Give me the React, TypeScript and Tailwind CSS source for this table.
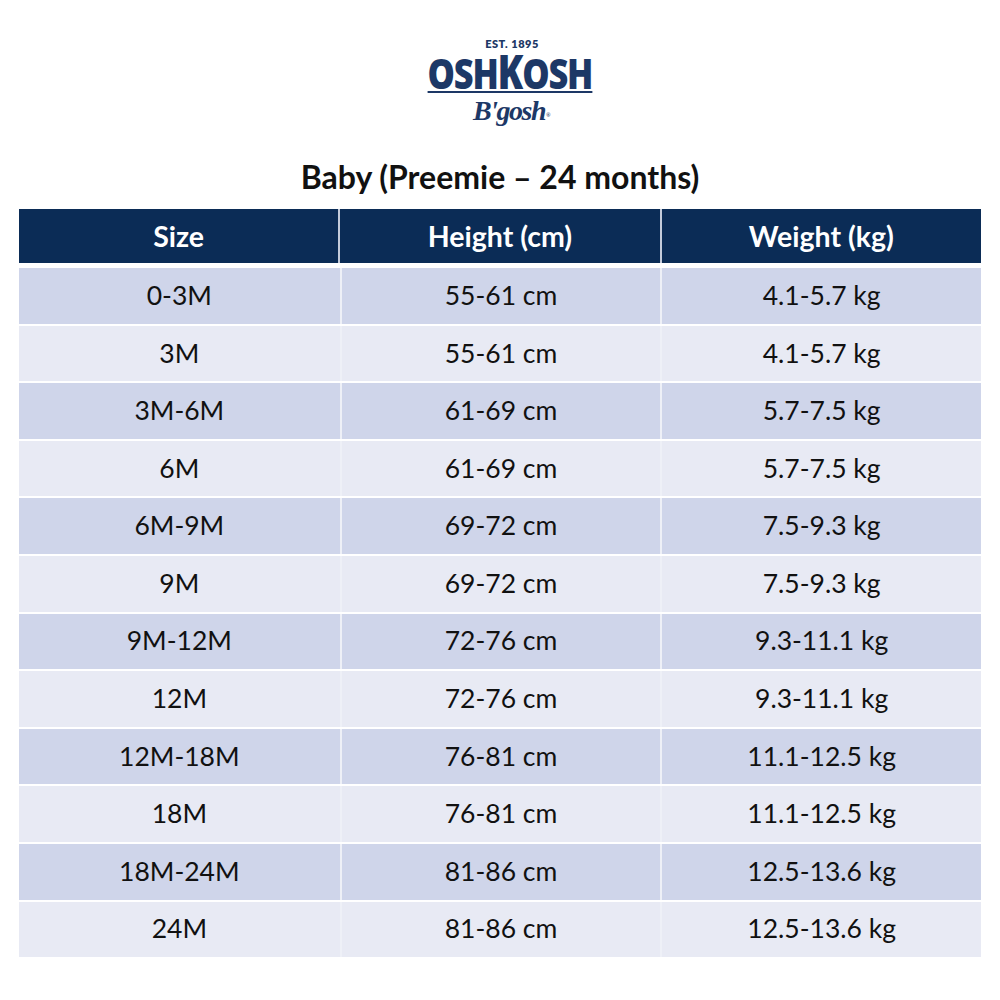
import React from "react";

type Row = { size: string; height: string; weight: string };

const rows: Row[] = [
  { size: "0-3M", height: "55-61 cm", weight: "4.1-5.7 kg" },
  { size: "3M", height: "55-61 cm", weight: "4.1-5.7 kg" },
  { size: "3M-6M", height: "61-69 cm", weight: "5.7-7.5 kg" },
  { size: "6M", height: "61-69 cm", weight: "5.7-7.5 kg" },
  { size: "6M-9M", height: "69-72 cm", weight: "7.5-9.3 kg" },
  { size: "9M", height: "69-72 cm", weight: "7.5-9.3 kg" },
  { size: "9M-12M", height: "72-76 cm", weight: "9.3-11.1 kg" },
  { size: "12M", height: "72-76 cm", weight: "9.3-11.1 kg" },
  { size: "12M-18M", height: "76-81 cm", weight: "11.1-12.5 kg" },
  { size: "18M", height: "76-81 cm", weight: "11.1-12.5 kg" },
  { size: "18M-24M", height: "81-86 cm", weight: "12.5-13.6 kg" },
  { size: "24M", height: "81-86 cm", weight: "12.5-13.6 kg" },
];

const Logo = () => {
  return (
    <div className="flex flex-col items-center text-[#1d3866]">
      <span className="ml-[24px] font-['Lato',sans-serif] font-extrabold text-[11px] leading-[11px] tracking-[0.5px]">
        EST. 1895
      </span>
      <span className="mt-[5px] ml-[20px] scale-x-[0.8] font-['Open_Sans',sans-serif] font-extrabold text-[43px] leading-[34px] tracking-[-1.5px] border-b-2 border-[#1d3866] pb-[1px]">
        OSH<span className="text-[47px]">K</span>OSH
      </span>
      <span className="ml-[22px] font-['Liberation_Serif',serif] italic font-bold text-[28px] leading-[36px] tracking-[-1.5px]">
        B'gosh<sup className="text-[6px] ml-[1px]">®</sup>
      </span>
    </div>
  );
};

export default function App() {
  return (
    <div className="w-[1000px] h-[1000px] bg-white flex flex-col items-center pt-[38px] font-['Lato',sans-serif]">
      <Logo />
      <h1 className="mt-[29px] text-[32px] leading-[38px] font-bold text-[#111]">
        Baby (Preemie – 24 months)
      </h1>
      <div className="mt-[13px] w-[962px] flex flex-col text-[26.5px]">
        <div className="grid grid-cols-3 gap-x-[2px] h-[54px] bg-[#c4cbdb] text-[28.5px]">
          <div className="bg-[#0b2c56] flex items-center justify-center text-white font-bold">Size</div>
          <div className="bg-[#0b2c56] flex items-center justify-center text-white font-bold">Height (cm)</div>
          <div className="bg-[#0b2c56] flex items-center justify-center text-white font-bold">Weight (kg)</div>
        </div>
        <div className="mt-[5px] flex flex-col gap-y-[2px]">
          {rows.map((r, i) => (
            <div
              key={r.size}
              className={
                i % 2 === 0
                  ? "grid grid-cols-3 h-[55.6px] bg-[#cfd5ea]"
                  : "grid grid-cols-3 h-[55.6px] bg-[#e8eaf4]"
              }
            >
              <div className="flex items-center justify-center text-[#111]">{r.size}</div>
              <div className="border-l-2 border-[#eef0f7] flex items-center justify-center text-[#111]">{r.height}</div>
              <div className="border-l-2 border-[#eef0f7] flex items-center justify-center text-[#111]">{r.weight}</div>
            </div>
          ))}
        </div>
      </div>
    </div>
  );
}
